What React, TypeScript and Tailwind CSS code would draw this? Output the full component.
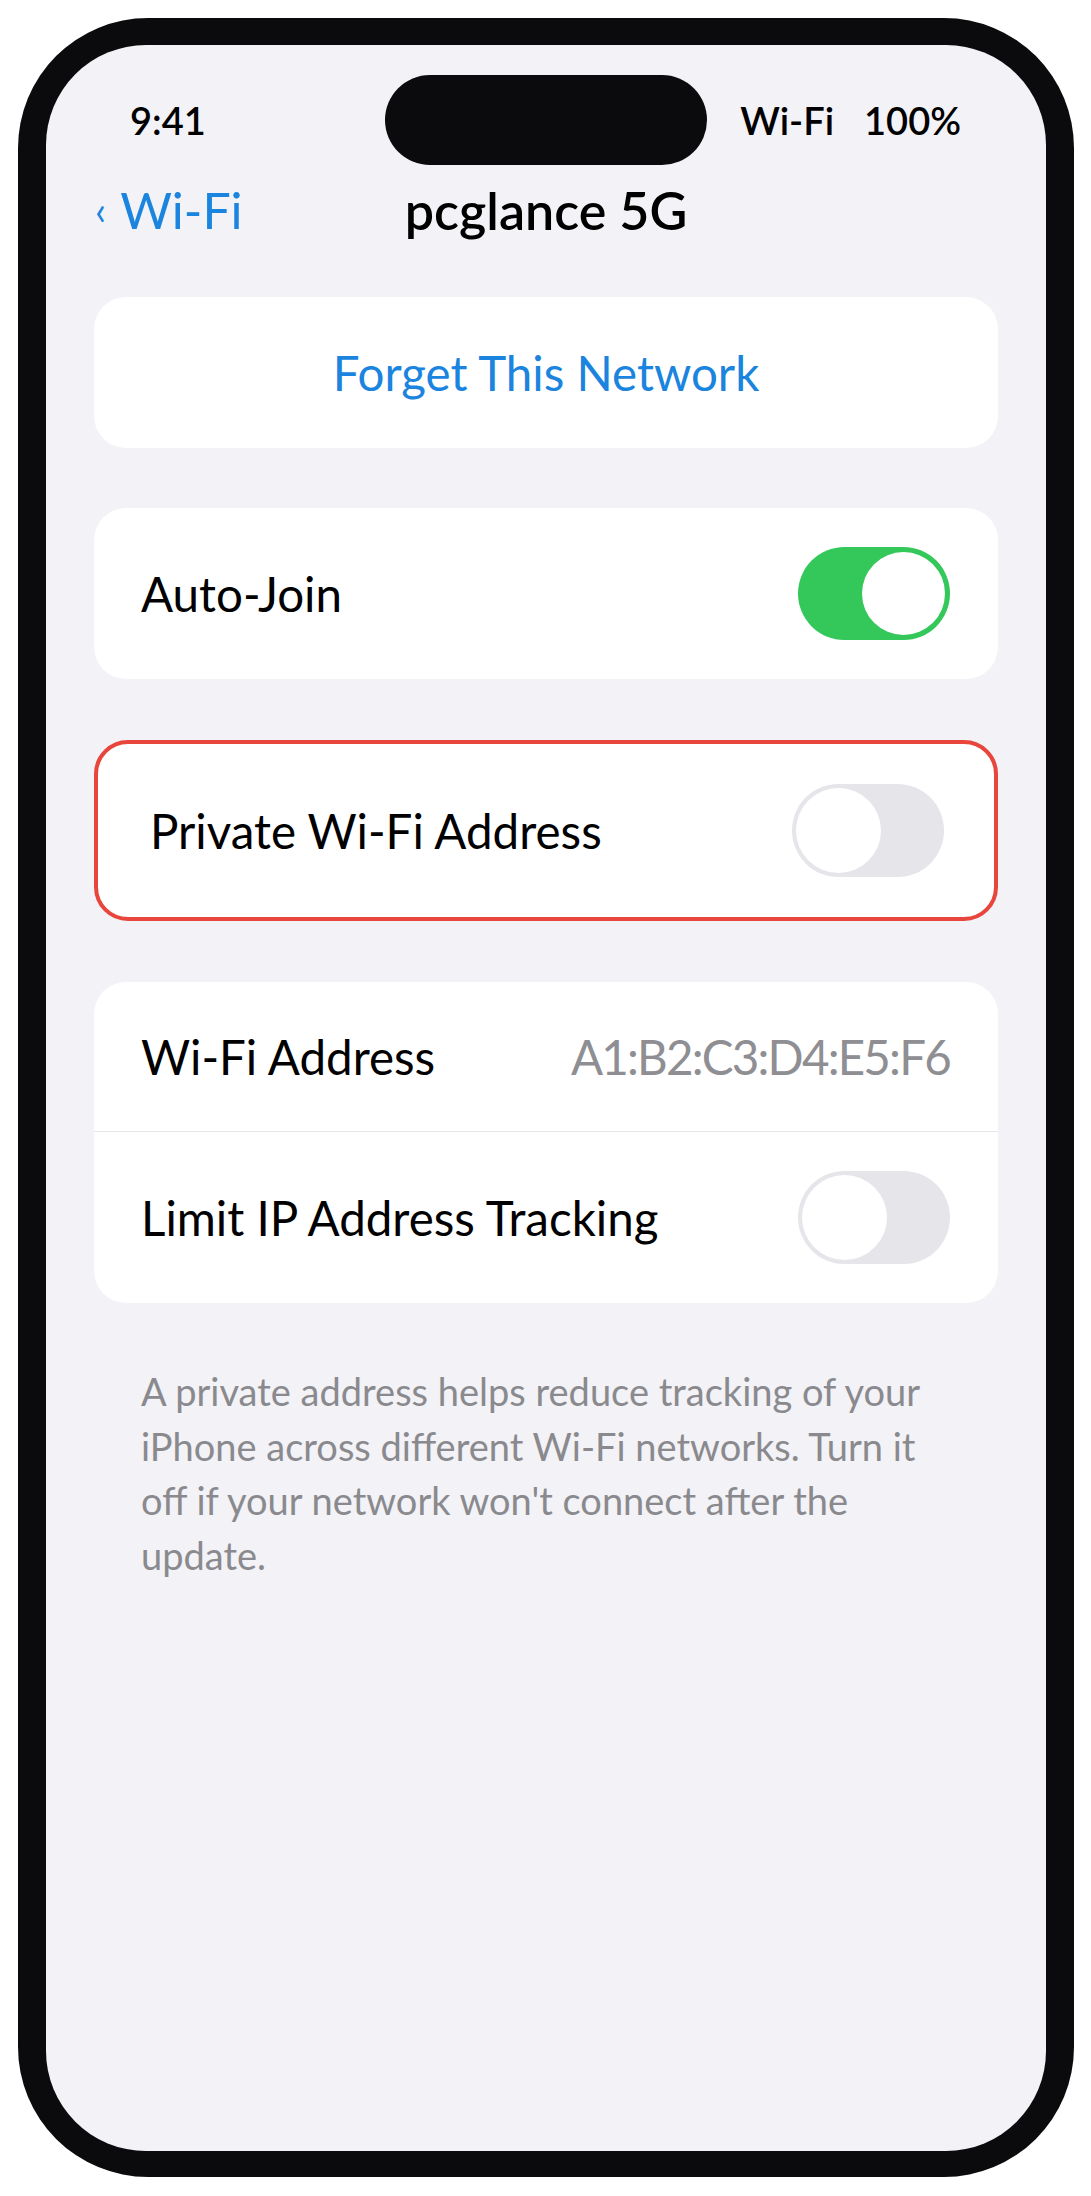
import React from "react";

function Toggle({ on }: { on: boolean }) {
  if (on) {
    return (
      <div className="flex h-[93px] w-[152px] shrink-0 items-center justify-end rounded-full bg-[#34C759] p-[5px]">
        <div className="h-[83px] w-[83px] rounded-full bg-white" />
      </div>
    );
  }
  return (
    <div className="flex h-[93px] w-[152px] shrink-0 items-center justify-start rounded-full bg-[#E5E5EA] p-[4px]">
      <div className="h-[85px] w-[85px] rounded-full bg-white" />
    </div>
  );
}

export default function App() {
  return (
    <div className="min-h-[2196px] w-[1091px] bg-white pl-[18px] pt-[18px] font-['Lato','Segoe_UI',sans-serif] text-black">
      <div className="h-[2159px] w-[1056px] rounded-[130px] bg-[#0b0b0d] px-[28px] pb-[26px] pt-[27px]">
        <div className="flex h-full w-full flex-col rounded-[100px] bg-[#F2F2F7]">
          {/* Status bar */}
          <div className="flex h-[120px] items-center pt-[30px]">
            <div className="flex flex-1 pl-[84px]">
              <span className="text-[38px] font-semibold leading-none">9:41</span>
            </div>
            <div className="h-[90px] w-[322px] rounded-full bg-[#0b0b0d]" />
            <div className="flex flex-1 justify-end gap-[30px] pr-[85px] text-[38px] font-semibold leading-none">
              <span>Wi-Fi</span>
              <span>100%</span>
            </div>
          </div>

          {/* Nav bar */}
          <div className="mt-[15px] grid h-[60px] grid-cols-[1fr_auto_1fr] items-center">
            <div className="flex items-center gap-[14px] pl-[49px] text-[#1a84de]">
              <span className="text-[40px] leading-none">‹</span>
              <span className="text-[50px] leading-none">Wi-Fi</span>
            </div>
            <div className="text-[52px] font-semibold leading-none">pcglance 5G</div>
            <div />
          </div>

          <div className="flex flex-col px-[48px]">
            {/* Forget */}
            <div className="mt-[57px] flex h-[151px] items-center justify-center rounded-[32px] bg-white">
              <span className="text-[47.5px] text-[#1a84de]">Forget This Network</span>
            </div>

            {/* Auto-Join */}
            <div className="mt-[60px] flex h-[171px] items-center justify-between rounded-[32px] bg-white pl-[47px] pr-[48px]">
              <span className="text-[47.5px]">Auto-Join</span>
              <Toggle on />
            </div>

            {/* Private Wi-Fi Address (highlighted) */}
            <div className="mt-[61px] flex h-[181px] items-center justify-between rounded-[34px] border-[4px] border-[#E8453C] bg-white pl-[52px] pr-[50px]">
              <span className="text-[47.5px]">Private Wi-Fi Address</span>
              <Toggle on={false} />
            </div>

            {/* Address group */}
            <div className="mt-[61px] flex flex-col rounded-[32px] bg-white">
              <div className="flex h-[149px] items-center justify-between pl-[47px] pr-[48px]">
                <span className="text-[47.5px]">Wi-Fi Address</span>
                <span className="text-[47.5px] tracking-[-1.8px] text-[#8E8E93]">A1:B2:C3:D4:E5:F6</span>
              </div>
              <div className="h-px bg-[#E5E5EA]" />
              <div className="flex h-[171px] items-center justify-between pl-[47px] pr-[48px]">
                <span className="text-[47.5px]">Limit IP Address Tracking</span>
                <Toggle on={false} />
              </div>
            </div>

            {/* Footer */}
            <p className="mt-[61px] pl-[47px] text-[38px] leading-[54.5px] whitespace-nowrap text-[#8A8A8E]">
              A private address helps reduce tracking of your
              <br />
              iPhone across different Wi-Fi networks. Turn it
              <br />
              off if your network won't connect after the
              <br />
              update.
            </p>
          </div>
        </div>
      </div>
    </div>
  );
}
